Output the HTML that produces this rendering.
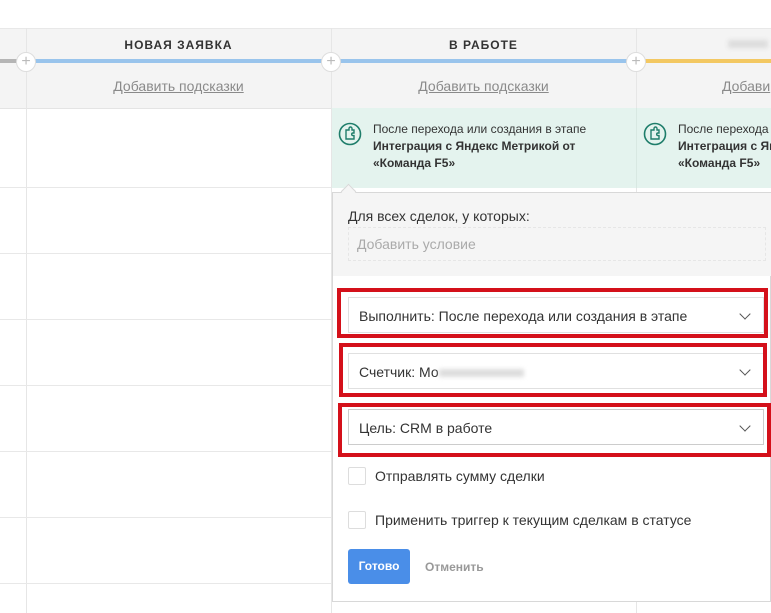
<!DOCTYPE html><html><head><meta charset="utf-8"><style>
html,body{margin:0;width:771px;height:613px;overflow:hidden}
body{background:#fff;font-family:"Liberation Sans",sans-serif}
#w{position:relative;width:771px;height:613px;overflow:hidden}
.a{position:absolute}
.hl{position:absolute;height:1px;background:#e8e8e8}
.vl{position:absolute;width:1px;background:#e6e6e6}
.t{color:#333;font-size:12px;font-weight:bold;letter-spacing:1px;text-align:center}
.lnk{color:#8a8a8a;font-size:14px;text-decoration:underline;text-align:center}
.plus{position:absolute;width:18px;height:18px;border-radius:50%;background:#fff;border:1px solid #ddd;color:#bbb;font-size:16px;line-height:17px;text-align:center}
.sel{position:absolute;left:348px;width:416px;height:36px;border:1px solid #e0e0e0;background:#fff;font-size:14px;color:#333;line-height:36px;padding-left:10px;box-sizing:border-box}
.sel:after{content:"";position:absolute;right:14px;top:12px;width:7px;height:7px;border-right:1.5px solid #555;border-bottom:1.5px solid #555;transform:rotate(45deg)}
.red{position:absolute;border:4px solid #d4101a;box-sizing:border-box}
.cb{position:absolute;left:348px;width:18px;height:18px;border:1px solid #ddd;border-radius:2px;box-sizing:border-box}
</style></head><body><div id="w">
<div class="a" style="left:0;top:28px;width:771px;height:79px;background:#f4f4f4;border-top:1px solid #e8e8e8;border-bottom:1px solid #e4e4e4"></div>
<div class="a" style="left:0;top:59px;width:26px;height:4px;background:#b5b5b5"></div>
<div class="a" style="left:26px;top:59px;width:305px;height:4px;background:#99c4ec"></div>
<div class="a" style="left:331px;top:59px;width:305px;height:4px;background:#99c4ec"></div>
<div class="a" style="left:636px;top:59px;width:135px;height:4px;background:#f3c862"></div>
<div class="vl" style="left:26px;top:28px;height:585px"></div>
<div class="vl" style="left:331px;top:28px;height:585px"></div>
<div class="vl" style="left:636px;top:28px;height:585px"></div>
<div class="plus" style="left:16px;top:52px">+</div>
<div class="plus" style="left:321px;top:52px">+</div>
<div class="plus" style="left:626px;top:52px">+</div>
<div class="a t" style="left:26px;top:38px;width:305px">НОВАЯ ЗАЯВКА</div>
<div class="a t" style="left:331px;top:38px;width:305px">В РАБОТЕ</div>
<div class="a" style="left:728px;top:40px;width:40px;height:8px;background:#ddd;filter:blur(2px)"></div>
<div class="a lnk" style="left:26px;top:78px;width:305px">Добавить подсказки</div>
<div class="a lnk" style="left:331px;top:78px;width:305px">Добавить подсказки</div>
<div class="a lnk" style="left:722px;top:78px">Добави</div>
<div class="hl" style="left:0;top:187px;width:331px"></div>
<div class="hl" style="left:0;top:253px;width:331px"></div>
<div class="hl" style="left:0;top:319px;width:331px"></div>
<div class="hl" style="left:0;top:385px;width:331px"></div>
<div class="hl" style="left:0;top:451px;width:331px"></div>
<div class="hl" style="left:0;top:517px;width:331px"></div>
<div class="hl" style="left:0;top:583px;width:331px"></div>
<div class="a" style="left:332px;top:108px;width:439px;height:80px;background:#e4f3ee"></div>
<div class="vl" style="left:636px;top:108px;height:80px;background:#d8e8e2"></div>
<svg class="a" style="left:338px;top:122px" width="24" height="24"><circle cx="12" cy="12" r="10.5" fill="none" stroke="#1e7d6a" stroke-width="1.6"/><path d="M8 8h3v-1.5a1.5 1.5 0 0 1 3 0V8h2v3h-1a1.3 1.3 0 0 0 0 2.6h1V17H8z" fill="none" stroke="#1e7d6a" stroke-width="1.4"/></svg>
<svg class="a" style="left:643px;top:122px" width="24" height="24"><circle cx="12" cy="12" r="10.5" fill="none" stroke="#1e7d6a" stroke-width="1.6"/><path d="M8 8h3v-1.5a1.5 1.5 0 0 1 3 0V8h2v3h-1a1.3 1.3 0 0 0 0 2.6h1V17H8z" fill="none" stroke="#1e7d6a" stroke-width="1.4"/></svg>
<div class="a" style="left:373px;top:121px;font-size:12px;color:#333;line-height:17px;white-space:nowrap">После перехода или создания в этапе<br><b>Интеграция с Яндекс Метрикой от<br>«Команда F5»</b></div>
<div class="a" style="left:678px;top:121px;width:93px;overflow:hidden;font-size:12px;color:#333;line-height:17px;white-space:nowrap">После перехода или создания<br><b>Интеграция с Яндекс<br>«Команда F5»</b></div>
<div class="a" style="left:332px;top:192px;width:439px;height:410px;background:#fff;border:1px solid #d8d8d8;box-sizing:border-box"></div>
<div class="a" style="left:333px;top:193px;width:438px;height:83px;background:#f5f5f5"></div>
<div class="a" style="left:343px;top:186px;width:10px;height:10px;background:#f5f5f5;border-left:1px solid #d8d8d8;border-top:1px solid #d8d8d8;transform:rotate(45deg)"></div>
<div class="a" style="left:348px;top:208px;font-size:14px;color:#333">Для всех сделок, у которых:</div>
<div class="a" style="left:348px;top:227px;width:418px;height:34px;border:1px dashed #e6e6e6;box-sizing:border-box"></div>
<div class="a" style="left:357px;top:236px;font-size:14px;color:#aaa">Добавить условие</div>
<div class="sel" style="top:297px">Выполнить: После перехода или создания в этапе</div>
<div class="sel" style="top:353px">Счетчик: Мо<span style="display:inline-block;width:85px;height:8px;background:#ddd;filter:blur(2px);vertical-align:middle"></span></div>
<div class="sel" style="top:409px;border-color:#ccc">Цель: CRM в работе</div>
<div class="red" style="left:337px;top:288px;width:431px;height:50px"></div>
<div class="red" style="left:339px;top:343px;width:428px;height:54px"></div>
<div class="red" style="left:338px;top:403px;width:433px;height:54px"></div>
<div class="cb" style="top:467px"></div>
<div class="a" style="left:375px;top:468px;font-size:14px;color:#333">Отправлять сумму сделки</div>
<div class="cb" style="top:511px"></div>
<div class="a" style="left:375px;top:512px;font-size:14px;color:#333">Применить триггер к текущим сделкам в статусе</div>
<div class="a" style="left:348px;top:549px;width:62px;height:35px;background:#4a8ee8;border-radius:3px;color:#fff;font-size:12px;font-weight:bold;line-height:35px;text-align:center">Готово</div>
<div class="a" style="left:425px;top:560px;font-size:12px;font-weight:bold;color:#999">Отменить</div>
</div></body></html>
